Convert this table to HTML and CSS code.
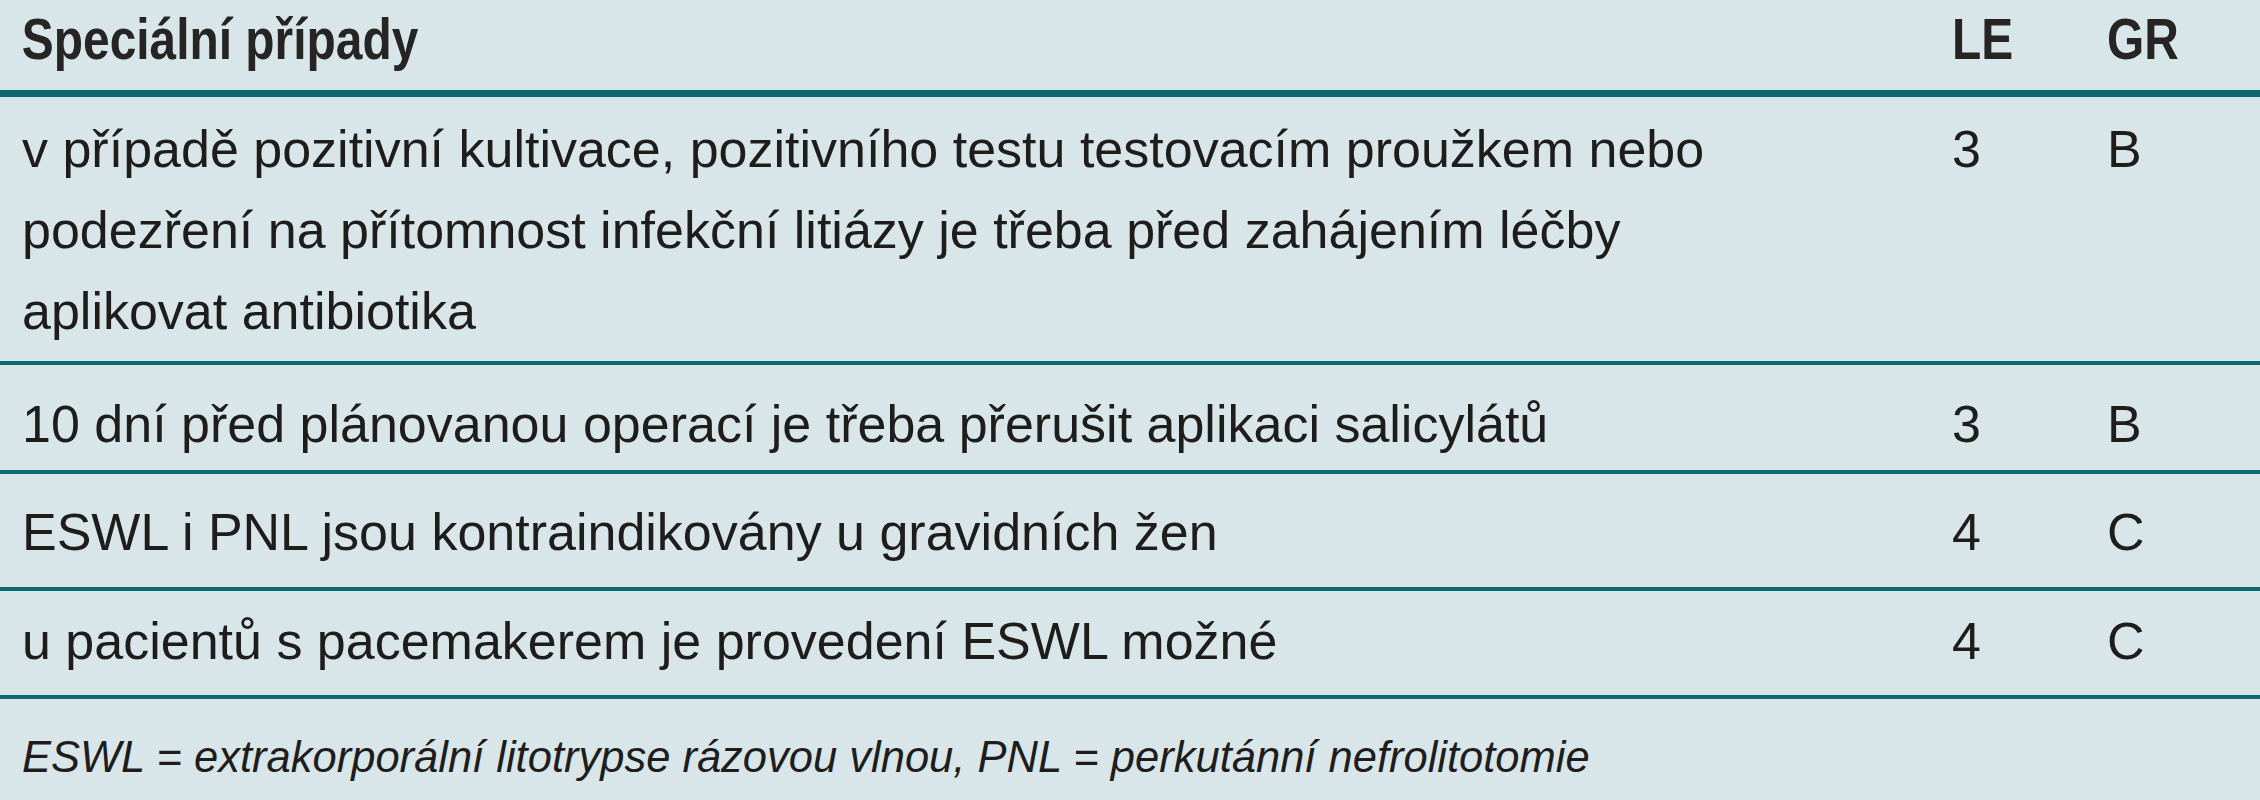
FILE: index.html
```html
<!DOCTYPE html>
<html lang="cs">
<head>
<meta charset="utf-8">
<title>Speciální případy</title>
<link rel="stylesheet" href="styles.css">
</head>
<body>
<div class="table">
  <div class="row head">
    <div class="cell text">Speciální případy</div>
    <div class="cell le">LE</div>
    <div class="cell gr">GR</div>
  </div>
  <div class="row r1">
    <div class="cell text">v případě pozitivní kultivace, pozitivního testu testovacím proužkem nebo podezření na přítomnost infekční litiázy je třeba před zahájením léčby aplikovat antibiotika</div>
    <div class="cell le">3</div>
    <div class="cell gr">B</div>
  </div>
  <div class="row r2">
    <div class="cell text">10 dní před plánovanou operací je třeba přerušit aplikaci salicylátů</div>
    <div class="cell le">3</div>
    <div class="cell gr">B</div>
  </div>
  <div class="row r3">
    <div class="cell text">ESWL i PNL jsou kontraindikovány u gravidních žen</div>
    <div class="cell le">4</div>
    <div class="cell gr">C</div>
  </div>
  <div class="row r4">
    <div class="cell text">u pacientů s pacemakerem je provedení ESWL možné</div>
    <div class="cell le">4</div>
    <div class="cell gr">C</div>
  </div>
  <div class="foot">ESWL = extrakorporální litotrypse rázovou vlnou, PNL = perkutánní nefrolitotomie</div>
</div>
</body>
</html>
```

FILE: styles.css
```css
html, body {
  margin: 0;
  padding: 0;
  background: #d8e6e9;
}
body {
  width: 2260px;
  height: 800px;
  overflow: hidden;
  color: #1e1d1c;
  font-family: "Liberation Sans", Arial, sans-serif;
}
.table {
  display: flex;
  flex-direction: column;
}
.row {
  display: grid;
  grid-template-columns: 1952px 155px 153px;
  font-size: 52px;
  line-height: 81px;
  border-bottom: 4px solid #0d6870;
}
.row .text {
  padding-left: 22px;
  padding-right: 170px;
}
.head {
  font-weight: bold;
  font-size: 57px;
  line-height: 79px;
  padding-bottom: 11px;
  border-bottom-width: 7px;
  color: #262524;
}
.head .cell {
  transform: scaleX(0.84);
  transform-origin: left center;
  white-space: nowrap;
}
.head .text {
  padding-left: 26px;
}
.r1 { padding: 12px 0 9px; }
.r2 { padding: 19px 0 5px; }
.r3 { padding: 18px 0 14px; }
.r4 { padding: 10px 0 13px; }
.foot {
  font-style: italic;
  font-size: 43.5px;
  line-height: 60px;
  padding: 28px 0 13px 22px;
}
```
